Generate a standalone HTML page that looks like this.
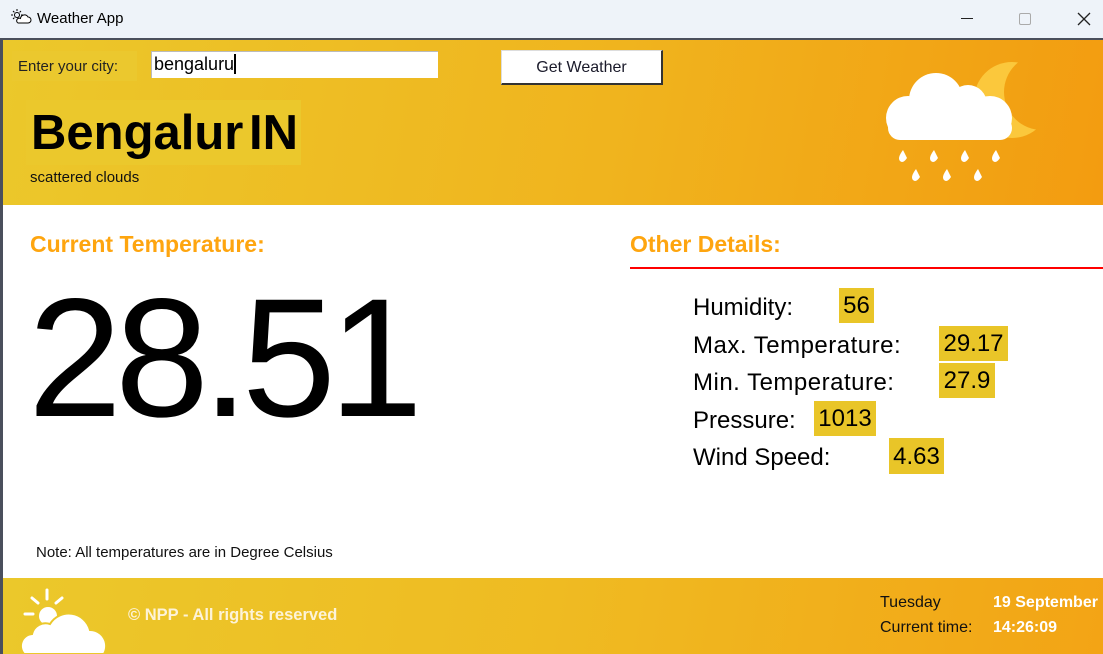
<!DOCTYPE html>
<html><head><meta charset="utf-8"><style>
*{margin:0;padding:0;box-sizing:border-box}
body{width:1103px;height:654px;overflow:hidden;position:relative;font-family:"Liberation Sans",Arial,sans-serif;background:#fff}
.a{position:absolute;white-space:nowrap}
#title{left:0;top:0;width:1103px;height:38px;background:#eef3f9}
#top{left:3px;top:40px;width:1100px;height:165px;background:linear-gradient(100deg,#ebc82b 0%,#f0b41e 55%,#f39c10 100%)}
#foot{left:3px;top:578px;width:1100px;height:76px;background:linear-gradient(100deg,#ebc82b 0%,#efbb22 50%,#f3a415 100%)}
.val{background:#e9c528;text-align:center}
.lbl{font-size:24px;color:#000}
</style></head><body>
<div class="a" id="title"></div>
<div class="a" style="left:0;top:38px;width:1103px;height:2px;background:#4a4f5c"></div>
<div class="a" style="left:0;top:38px;width:3px;height:616px;background:#4a4f5c"></div>
<svg class="a" style="left:10px;top:9px" width="22" height="16" viewBox="0 0 22 16"><g stroke="#000" stroke-width="1" fill="none"><circle cx="7" cy="6" r="2.5"/><path d="M7 0v2M7 10v2M1 6h2M11 6h2M3 2l1.4 1.4M11 2l-1.4 1.4M3 10l1.4-1.4"/><path d="M8 14h10a3 3 0 0 0 0-6 4 4 0 0 0-7.5 1.5A2.3 2.3 0 0 0 8 14z" fill="#fff"/></g></svg>
<div class="a" style="left:37px;top:10px;font-size:15px;color:#000">Weather App</div>
<div class="a" style="left:961px;top:18px;width:12px;height:1px;background:#222"></div>
<div class="a" style="left:1019px;top:13px;width:12px;height:12px;border:1px solid #aaa;border-radius:2px"></div>
<svg class="a" style="left:1077px;top:12px" width="14" height="14"><path d="M1 1L13 13M13 1L1 13" stroke="#222" stroke-width="1.3"/></svg>

<div class="a" id="top"></div>
<div class="a" style="left:12px;top:51px;width:125px;height:30px;background:#ebc82e"></div>
<div class="a" style="left:18px;top:58px;font-size:15px;color:#222">Enter your city:</div>
<div class="a" style="left:151px;top:51px;width:287px;height:27px;background:#fff;border-top:1px solid #bbb;border-left:1px solid #bbb"></div>
<div class="a" style="left:154px;top:54px;font-size:18px;color:#000">bengaluru<span style="display:inline-block;width:2px;height:20px;background:#000;vertical-align:-4px"></span></div>
<div class="a" style="left:501px;top:50px;width:162px;height:35px;background:#fff;border-right:2px solid #333;border-bottom:2px solid #333;border-top:1px solid #ddd;border-left:1px solid #ddd;font-size:16px;text-align:center;line-height:34px;color:#1a1a2a">Get Weather</div>

<div class="a" style="left:26px;top:100px;width:275px;height:65px;background:#ebc82c"></div>
<div class="a" style="left:31px;top:105px;font-size:49px;font-weight:bold;color:#000;line-height:56px;word-spacing:-8px">Bengalur IN</div>
<div class="a" style="left:30px;top:169px;font-size:15px;color:#111">scattered clouds</div>

<svg class="a" style="left:880px;top:58px" width="165" height="135" viewBox="0 0 165 135">
<defs><mask id="m"><rect width="165" height="135" fill="#fff"/><circle cx="162" cy="34" r="38" fill="#000"/></mask></defs>
<circle cx="132" cy="42" r="38" fill="#fbc83c" mask="url(#m)"/>
<g fill="#fff">
<circle cx="56" cy="42" r="27"/><circle cx="28" cy="60" r="22"/><circle cx="88" cy="46" r="19"/><circle cx="110" cy="60" r="22"/>
<rect x="8" y="58" width="124" height="24" rx="12"/>
<path d="M23 92q-6 8-3 11t7-3z"/><path d="M54 92q-6 8-3 11t7-3z"/><path d="M85 92q-6 8-3 11t7-3z"/><path d="M116 92q-6 8-3 11t7-3z"/><path d="M36 111q-6 8-3 11t7-3z"/><path d="M67 111q-6 8-3 11t7-3z"/><path d="M98 111q-6 8-3 11t7-3z"/></g>
</svg>

<div class="a" style="left:30px;top:231px;font-size:23px;font-weight:bold;color:#fea50f">Current Temperature:</div>
<div class="a" style="left:28px;top:273px;font-size:169px;line-height:169px;letter-spacing:-7px;color:#000">28.51</div>
<div class="a" style="left:36px;top:544px;font-size:15px;color:#111">Note: All temperatures are in Degree Celsius</div>

<div class="a" style="left:630px;top:231px;font-size:23px;font-weight:bold;color:#fea50f">Other Details:</div>
<div class="a" style="left:630px;top:267px;width:473px;height:2px;background:#f00"></div>

<div class="a lbl" style="left:693px;top:294px">Humidity:</div>
<div class="a lbl val" style="left:839px;top:288px;width:35px;height:35px;line-height:35px">56</div>
<div class="a lbl" style="left:693px;top:332px;letter-spacing:0.5px">Max. Temperature:</div>
<div class="a lbl val" style="left:939px;top:326px;width:69px;height:35px;line-height:36px">29.17</div>
<div class="a lbl" style="left:693px;top:369px;letter-spacing:0.5px">Min. Temperature:</div>
<div class="a lbl val" style="left:939px;top:363px;width:56px;height:35px;line-height:36px">27.9</div>
<div class="a lbl" style="left:693px;top:407px">Pressure:</div>
<div class="a lbl val" style="left:814px;top:401px;width:62px;height:35px;line-height:36px">1013</div>
<div class="a lbl" style="left:693px;top:444px">Wind Speed:</div>
<div class="a lbl val" style="left:889px;top:438px;width:55px;height:36px;line-height:37px">4.63</div>

<div class="a" id="foot"></div>
<svg class="a" style="left:18px;top:586px" width="90" height="68" viewBox="0 0 90 68">
<g stroke="#fff" stroke-width="3" stroke-linecap="round"><path d="M29 4v9M14 12l6 5M44 12l-6 5M7 28h8"/></g>
<circle cx="30" cy="30" r="9" fill="#fff"/>
<path d="M6 68a12 12 0 0 1 8-20a14 14 0 0 1 18-10a22 22 0 0 1 40 6a16 16 0 0 1 14 24z" fill="#fff" stroke="#ebc82b" stroke-width="2"/>
</svg>
<div class="a" style="left:128px;top:606px;font-size:16.5px;font-weight:bold;color:#fdf3d8">© NPP - All rights reserved</div>
<div class="a" style="left:880px;top:594px;font-size:16px;color:#111">Tuesday</div>
<div class="a" style="left:880px;top:619px;font-size:16px;color:#111">Current time:</div>
<div class="a" style="left:993px;top:594px;font-size:16px;font-weight:bold;color:#fff">19 September</div>
<div class="a" style="left:993px;top:619px;font-size:16px;font-weight:bold;color:#fff">14:26:09</div>
</body></html>
